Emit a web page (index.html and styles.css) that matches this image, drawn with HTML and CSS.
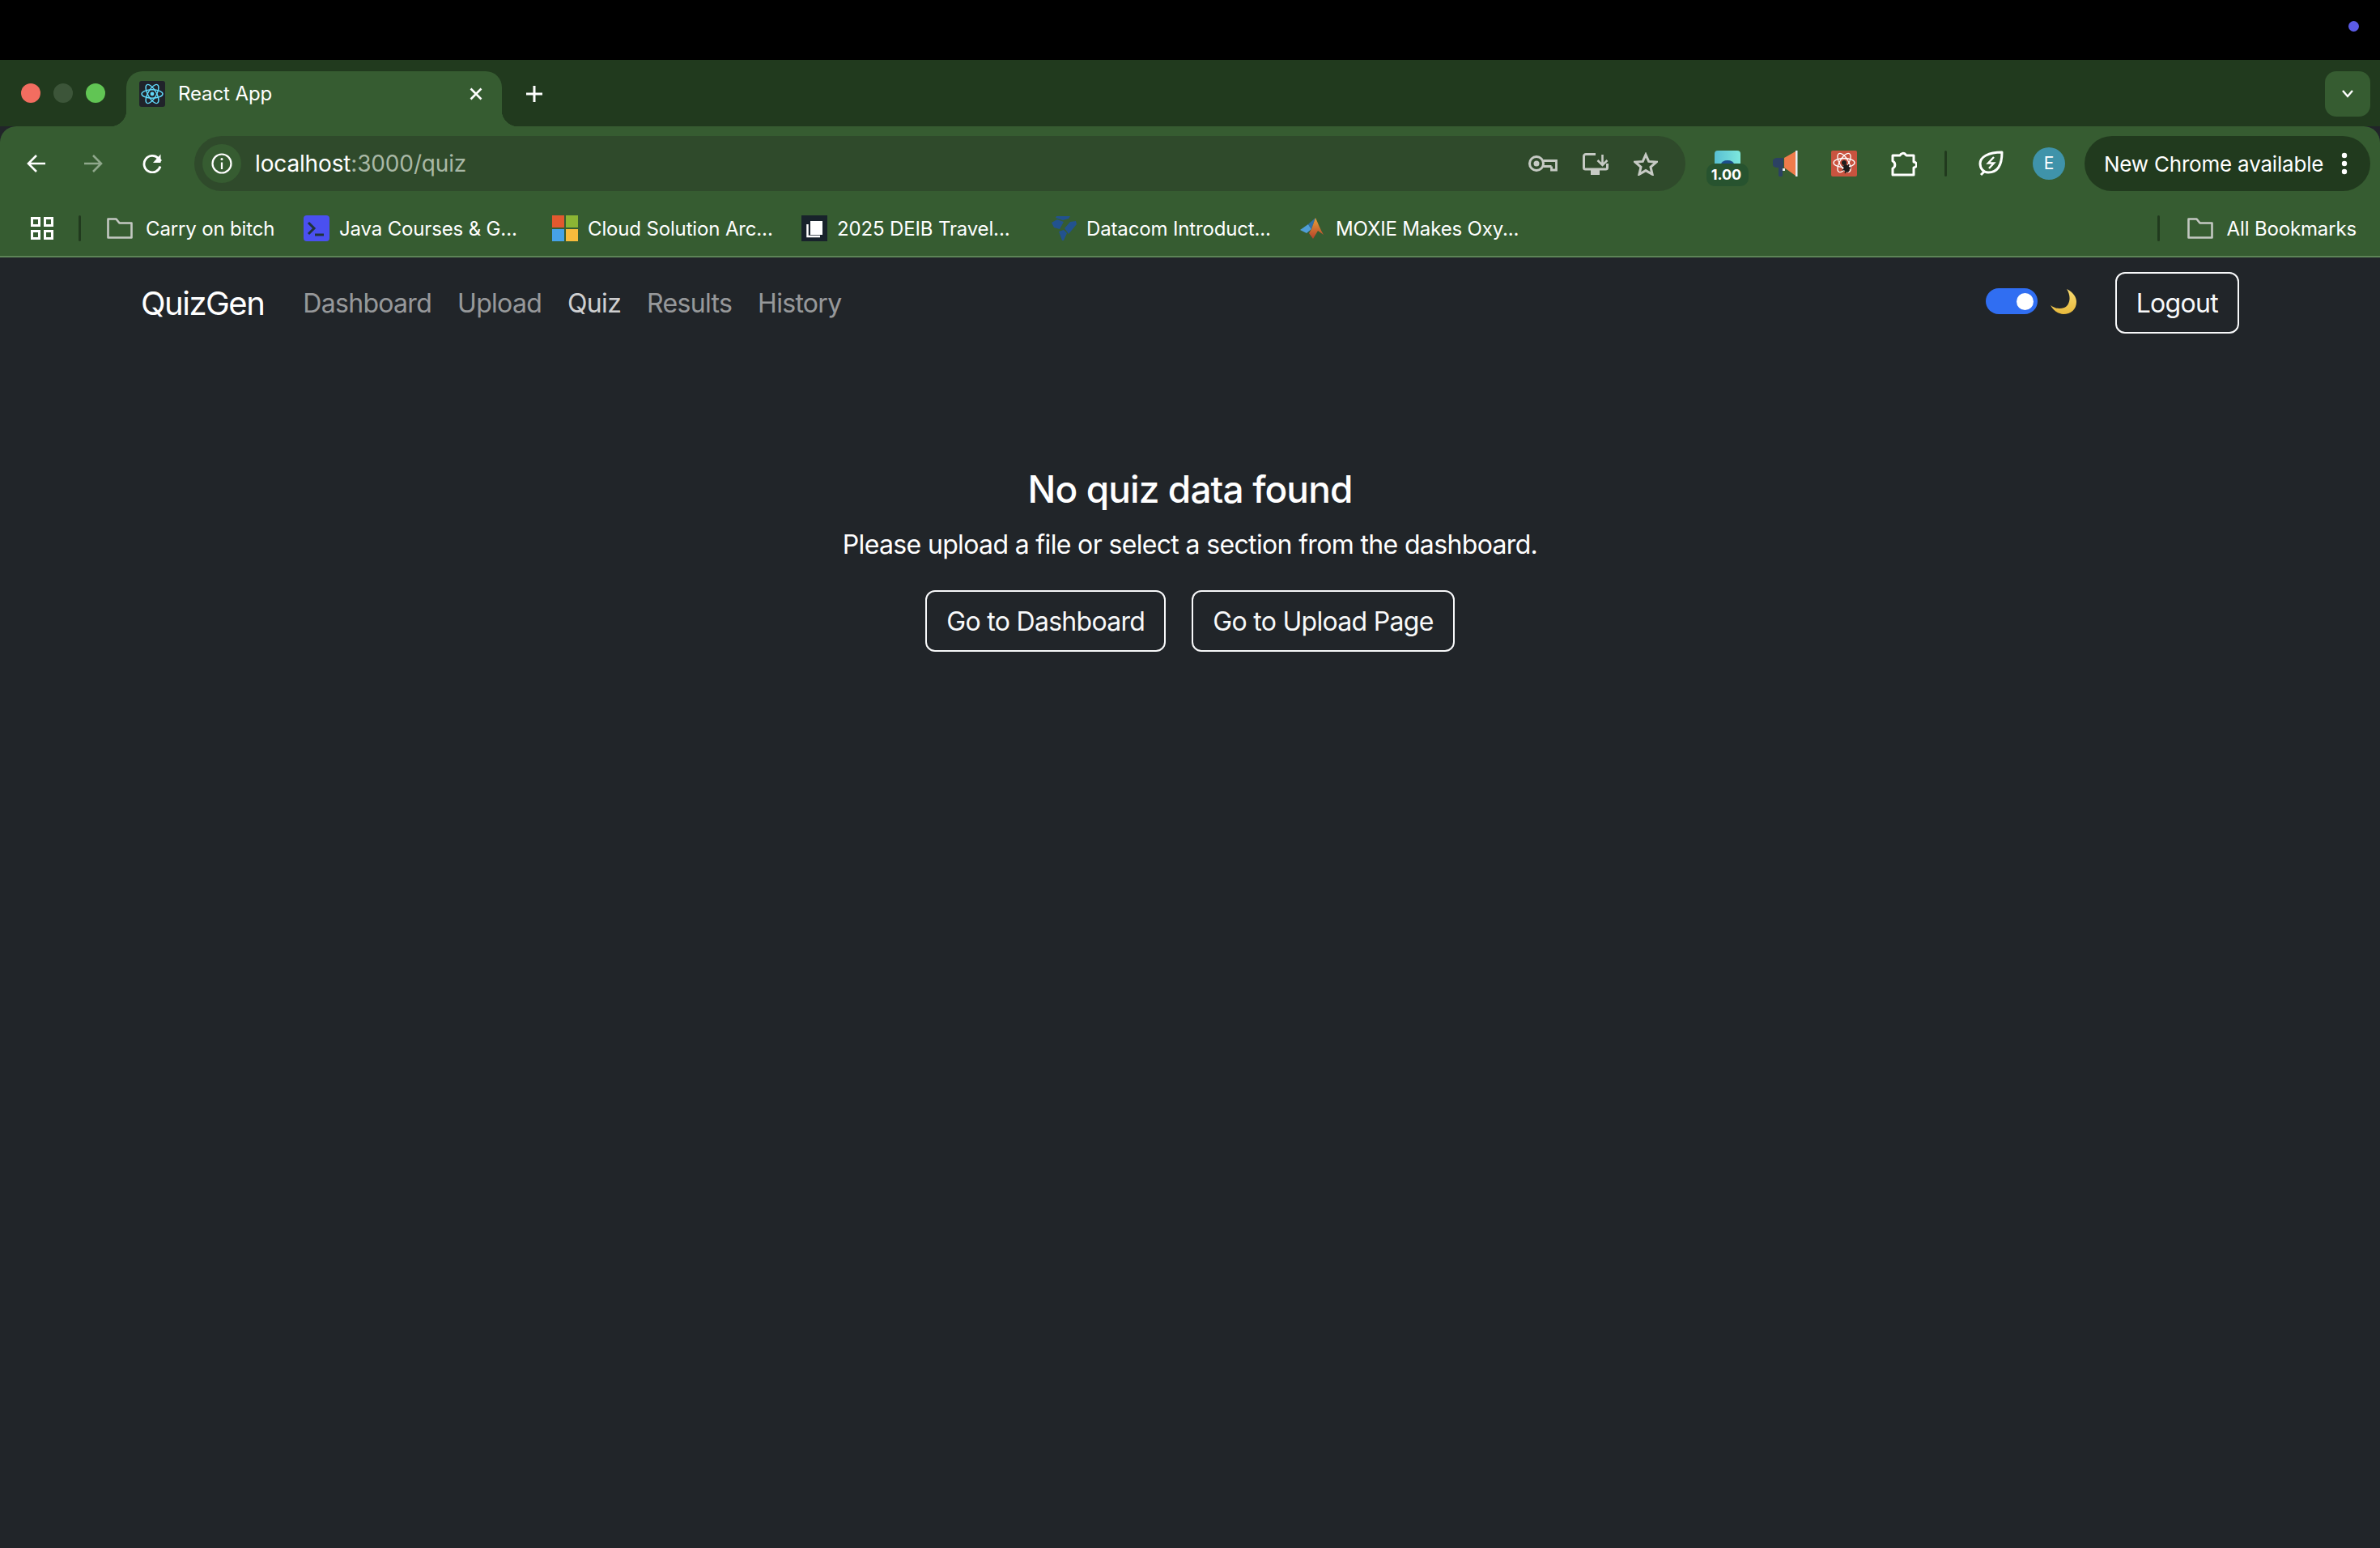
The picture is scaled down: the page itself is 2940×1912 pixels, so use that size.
FILE: index.html
```html
<!doctype html>
<html lang="en">
  <head>
    <meta charset="UTF-8" />
    <meta name="viewport" content="width=device-width, initial-scale=1.0" />
    <title>React App</title>
    <link rel="stylesheet" href="styles.css">
  </head>
  <body>
    <div class="menubar"><span class="mic-dot"></span></div>

    <div class="tabstrip">
      <div class="lights">
        <span class="light red"></span>
        <span class="light gray"></span>
        <span class="light green"></span>
      </div>
      <div class="tab">
        <svg class="favicon" viewBox="0 0 32 32">
          <rect width="32" height="32" rx="3" fill="#20232a" />
          <g fill="none" stroke="#61dafb" stroke-width="1.4">
            <ellipse cx="16" cy="16" rx="13" ry="5.2" />
            <ellipse cx="16" cy="16" rx="13" ry="5.2" transform="rotate(60 16 16)" />
            <ellipse cx="16" cy="16" rx="13" ry="5.2" transform="rotate(120 16 16)" />
          </g>
          <circle cx="16" cy="16" r="2.4" fill="#61dafb" />
        </svg>
        <span class="tab-title">React App</span>
        <svg class="tab-close" viewBox="0 0 16 16">
          <path d="M1.500 1.500l13 13M14.500 1.500l-13 13" stroke="#fff" stroke-width="2.600" fill="none" />
        </svg>
      </div>
      <svg class="new-tab" viewBox="0 0 22 22">
        <path d="M11 1v20M1 11h20" stroke="#fff" stroke-width="3" fill="none" />
      </svg>
      <div class="tab-search">
        <svg viewBox="0 0 16 12" width="16" height="12">
          <path d="M2 2l6 7 6-7" stroke="#fff" stroke-width="2.400" fill="none" />
        </svg>
      </div>
    </div>

    <div class="toolbar">
      <div class="nav-row">
        <svg class="nav-icon" viewBox="0 0 24 24">
          <path d="M24 12H3M13 2L3 12l10 10" stroke="#fff" stroke-width="2.600" fill="none" />
        </svg>
        <svg class="nav-icon" viewBox="0 0 24 24">
          <path d="M0 12h21M11 2l10 10-10 10" stroke="#8fa78b" stroke-width="2.600" fill="none" />
        </svg>
        <svg class="nav-icon" viewBox="0 0 24 24">
          <path d="M22 15.500A10.200 10.200 0 1 1 19.500 5.500L23 9" stroke="#fff" stroke-width="2.800" fill="none" />
          <path d="M22.500 .5v10.500H13z" fill="#fff" />
        </svg>

        <div class="omnibox">
          <div class="site-chip">
            <svg viewBox="0 0 26 26" width="26" height="26">
              <circle cx="13" cy="13" r="11.500" stroke="#fff" stroke-width="2.200" fill="none" />
              <path d="M13 11.500V20" stroke="#fff" stroke-width="2.200" />
              <circle cx="13" cy="7.600" r="1.500" fill="#fff" />
            </svg>
          </div>
          <div class="url">localhost<span class="url-dim">:3000/quiz</span></div>
          <div class="omni-icons">
            <svg viewBox="0 0 36 20" width="36" height="20">
              <circle cx="10" cy="10" r="8.500" stroke="#c6cac4" stroke-width="3" fill="none" />
              <circle cx="10" cy="10" r="3.500" fill="#c6cac4" />
              <path d="M18.500 6.500h16v11.500h-6v-4.500M18.500 13.500h10" stroke="#c6cac4" stroke-width="2.800" fill="none" />
            </svg>
            <svg viewBox="0 0 32 27" width="32" height="27">
              <path d="M16 1.500H4A2.500 2.500 0 0 0 1.500 4v14a2 2 0 0 0 2 2h25a2 2 0 0 0 2-2v-5" stroke="#c6cac4" stroke-width="3" fill="none" />
              <path d="M24.500 2v13M18.500 9l6 6 6-6" stroke="#c6cac4" stroke-width="2.600" fill="none" />
              <rect x="10" y="21" width="11" height="6" fill="#c6cac4" />
            </svg>
            <svg viewBox="0 0 30 29" width="30" height="29">
              <path d="M15 3l3.700 8.400 9.300 .8-7 6.100 2.100 9-8.100-4.700-8.100 4.700 2.100-9-7-6.100 9.300-.8z" stroke="#c6cac4" stroke-width="3" fill="none" />
            </svg>
          </div>
        </div>

        <div class="ext-group">
          <div class="ext ext-speed">
            <svg viewBox="0 0 32 32" width="32" height="32">
              <defs>
                <linearGradient id="speedGrad" x1="0" y1="0" x2="1" y2="0">
                  <stop offset="0" stop-color="#58bfd3" />
                  <stop offset="1" stop-color="#7ee8dc" />
                </linearGradient>
              </defs>
              <path d="M0 16V4a4 4 0 0 1 4-4h24a4 4 0 0 1 4 4v12z" fill="url(#speedGrad)" />
              <ellipse cx="16" cy="17" rx="8" ry="5" fill="#1c4f8a" />
            </svg>
            <span class="ext-badge">1.00</span>
          </div>
          <svg class="ext" viewBox="0 0 32 32">
            <path d="M14 9L28 1v30L14 21z" fill="#ef7b4b" />
            <path d="M13 9H5a5 5 0 0 0 0 12h8z" fill="#2c4163" />
            <path d="M7 21h5v9a2.500 2.500 0 0 1-5 0z" fill="#2c4163" />
            <rect x="28" y="0" width="2.500" height="32" fill="#e8edf2" />
            <rect x="12" y="22" width="3" height="3" fill="#e8edf2" />
          </svg>
          <svg class="ext" viewBox="0 0 32 32">
            <rect width="32" height="32" rx="2" fill="#c9533f" />
            <g fill="none" stroke="#fff" stroke-width="1.300">
              <ellipse cx="16" cy="15" rx="13" ry="5.500" />
              <ellipse cx="16" cy="15" rx="13" ry="5.500" transform="rotate(60 16 15)" />
              <ellipse cx="16" cy="15" rx="13" ry="5.500" transform="rotate(120 16 15)" />
            </g>
            <circle cx="16" cy="15" r="3" fill="#1d1d1d" />
            <ellipse cx="19" cy="22" rx="3.500" ry="5" fill="#1d1d1d" transform="rotate(-20 19 22)" />
            <path d="M14 19l10 3M14 24l10-3M17 28l5-11" stroke="#1d1d1d" stroke-width="1.500" />
          </svg>
          <svg class="ext ext-puzzle" viewBox="0 0 32 32">
            <path d="M2 6h9a4 4 0 0 1 7-1l1 1h9v8a3.500 3.500 0 0 1 0 7v9H2v-8a5 5 0 0 0 0-9z" stroke="#fff" stroke-width="3" fill="none" stroke-linejoin="round" />
          </svg>
          <span class="vline ext-line"></span>
          <svg class="ext ext-leaf" viewBox="0 0 32 32">
            <path d="M29 2C29 16 25 27 12 27C6 27 2 22 2 16C2 8 12 2 29 2zM8 25l-5 5" stroke="#fff" stroke-width="3" fill="none" stroke-linejoin="round" />
            <path d="M19 8l-7 7.500h7L13 22" stroke="#fff" stroke-width="2.400" fill="none" />
          </svg>
          <div class="avatar">E</div>
          <div class="update-pill">
            <span>New Chrome available</span>
            <svg viewBox="0 0 8 28" width="8" height="28">
              <circle cx="4" cy="4" r="3.200" fill="#fff" />
              <circle cx="4" cy="14" r="3.200" fill="#fff" />
              <circle cx="4" cy="24" r="3.200" fill="#fff" />
            </svg>
          </div>
        </div>
      </div>

      <div class="bookmarks-row">
        <svg class="apps" viewBox="0 0 28 28">
          <path d="M1.500 1.500h9v9h-9zM17.500 1.500h9v9h-9zM1.500 17.500h9v9h-9zM17.500 17.500h9v9h-9z" stroke="#fff" stroke-width="3" fill="none" />
        </svg>
        <span class="vline"></span>
        <div class="bookmarks">
          <div class="bookmark bookmark-folder">
            <svg class="bm-icon" viewBox="0 0 32 26" height="26">
              <path d="M1.500 24.500V1.500h10l4 5h15v18z" stroke="#c4c8c2" stroke-width="2.600" fill="none" stroke-linejoin="round" />
            </svg>
            <span>Carry on bitch</span>
          </div>
          <div class="bookmark">
            <svg class="bm-icon" viewBox="0 0 32 32">
              <rect width="32" height="32" rx="4" fill="#4a50f0" />
              <path d="M6 9l7 7-7 7" stroke="#20343a" stroke-width="3" fill="none" />
              <path d="M14 24h11" stroke="#20343a" stroke-width="3" />
            </svg>
            <span>Java Courses &amp; G...</span>
          </div>
          <div class="bookmark">
            <svg class="bm-icon" viewBox="0 0 32 32">
              <rect width="15" height="15" fill="#e2592f" />
              <rect x="17" width="15" height="15" fill="#8cb534" />
              <rect y="17" width="15" height="15" fill="#46a2e8" />
              <rect x="17" y="17" width="15" height="15" fill="#f8bb3c" />
            </svg>
            <span>Cloud Solution Arc...</span>
          </div>
          <div class="bookmark">
            <svg class="bm-icon" viewBox="0 0 32 32">
              <rect width="32" height="32" fill="#18222b" />
              <rect x="11" y="7" width="15" height="17" fill="#fff" />
              <path d="M7.500 11v15H23" stroke="#fff" stroke-width="2.500" fill="none" />
            </svg>
            <span>2025 DEIB Travel...</span>
          </div>
          <div class="bookmark">
            <svg class="bm-icon" viewBox="0 0 32 32">
              <path d="M7 1h17l-2 3-7 2-9-3zM1 9l7-4 8 3-5 9-7-2zM31 7l1 4-10 12-5-7 7-8zM10 20l6-2 4 4-4 9h-2z" fill="#22528f" />
            </svg>
            <span>Datacom Introduct...</span>
          </div>
          <div class="bookmark bookmark-last">
            <svg class="bm-icon" viewBox="0 0 29 26" height="26">
              <defs>
                <linearGradient id="matlabGrad" x1="0" y1="0" x2="0" y2="1">
                  <stop offset="0" stop-color="#e8a33a" />
                  <stop offset="1" stop-color="#b5402a" />
                </linearGradient>
              </defs>
              <path d="M0 15l10-7 4 6-6 5z" fill="#4f9ed8" />
              <path d="M10 8l9-8-5 14z" fill="#2f6fa8" />
              <path d="M14 14L19 0c3 6 6 15 10 21l-7-5-6 10-5-7z" fill="url(#matlabGrad)" />
            </svg>
            <span>MOXIE Makes Oxy...</span>
          </div>
        </div>
        <span class="vline all-line"></span>
        <div class="bookmark all-bookmarks">
          <svg class="bm-icon" viewBox="0 0 32 26" height="26">
            <path d="M1.500 24.500V1.500h10l4 5h15v18z" stroke="#c4c8c2" stroke-width="2.600" fill="none" stroke-linejoin="round" />
          </svg>
          <span>All Bookmarks</span>
        </div>
      </div>
    </div>

    <nav class="navbar">
      <div class="nav-left">
        <a class="brand">QuizGen</a>
        <ul class="nav-links">
          <li>Dashboard</li>
          <li>Upload</li>
          <li class="active">Quiz</li>
          <li>Results</li>
          <li>History</li>
        </ul>
      </div>
      <div class="nav-right">
        <span class="switch"><span class="switch-knob"></span></span>
        <svg class="moon" viewBox="0 0 32 32">
          <defs>
            <linearGradient id="moonGrad" x1="0" y1="0" x2="0" y2="1">
              <stop offset="0" stop-color="#f8dc72" />
              <stop offset="1" stop-color="#e8b93c" />
            </linearGradient>
          </defs>
          <path d="M20 1C28 5 32 11 32 17C32 26 25 32 16 32C9 32 3 27 0 21C5 25 11 26 17 24C24 21 26 10 20 1z" fill="url(#moonGrad)" />
        </svg>
        <button class="btn">Logout</button>
      </div>
    </nav>

    <main class="empty-state">
      <h4>No quiz data found</h4>
      <p>Please upload a file or select a section from the dashboard.</p>
      <div class="actions">
        <button class="btn">Go to Dashboard</button>
        <button class="btn">Go to Upload Page</button>
      </div>
    </main>
  </body>
</html>
```

FILE: styles.css
```css
* {
  box-sizing: border-box;
}

html,
body {
  margin: 0;
  height: 100%;
}

body {
  font-family: Inter, "Noto Sans", sans-serif;
  background-color: #212529;
  color: #fff;
  overflow: hidden;
}

svg {
  display: block;
  flex-shrink: 0;
}

.menubar {
  height: 74px;
  background-color: #000;
  display: flex;
  justify-content: flex-end;
  align-items: center;
  padding-right: 26px;
}

.mic-dot {
  width: 13px;
  height: 13px;
  border-radius: 50%;
  background-color: #5b5be6;
  margin-top: -10px;
}

/* tab strip */
.tabstrip {
  height: 82px;
  background-color: #213a1e;
  display: flex;
  align-items: flex-start;
  padding-top: 14px;
}

.lights {
  display: flex;
  gap: 16px;
  margin: 15px 26px 0;
}

.light {
  width: 24px;
  height: 24px;
  border-radius: 50%;
}

.red {
  background-color: #f26d60;
}

.gray {
  background-color: #3c5539;
}

.green {
  background-color: #61c554;
}

.tab {
  position: relative;
  width: 464px;
  height: 68px;
  background-color: #365c31;
  border-radius: 20px 20px 0 0;
  display: flex;
  align-items: flex-start;
  padding: 12px 24px 0 16px;
}

.tab::before,
.tab::after {
  content: "";
  position: absolute;
  bottom: 0;
  width: 20px;
  height: 20px;
}

.tab::before {
  left: -20px;
  background: radial-gradient(circle at 0 0, transparent 20px, #365c31 20.5px);
}

.tab::after {
  right: -20px;
  background: radial-gradient(circle at 100% 0, transparent 20px, #365c31 20.5px);
}

.favicon {
  width: 32px;
  height: 32px;
}

.tab-title {
  flex: 1;
  margin-left: 16px;
  font-size: 24px;
  line-height: 32px;
  letter-spacing: -0.1px;
}

.tab-close {
  width: 16px;
  height: 16px;
  margin-top: 8px;
}

.new-tab {
  width: 22px;
  height: 22px;
  margin: 17px 0 0 29px;
}

.tab-search {
  margin-left: auto;
  margin-right: 12px;
  width: 56px;
  height: 56px;
  border-radius: 14px;
  background-color: #365c31;
  display: flex;
  align-items: center;
  justify-content: center;
}

/* toolbar */
.toolbar {
  height: 162px;
  background-color: #365c31;
  border-radius: 20px 20px 0 0;
  border-bottom: 2px solid #5d8457;
}

.nav-row {
  height: 92px;
  display: flex;
  align-items: flex-start;
  padding: 12px 12px 0 32px;
}

.nav-icon {
  width: 24px;
  height: 24px;
  margin: 22px 48px 0 0;
}

.nav-icon:nth-child(3) {
  margin-right: 40px;
}

.omnibox {
  flex: 1;
  height: 68px;
  border-radius: 34px;
  background-color: #2f4a2b;
  display: flex;
  align-items: center;
  padding: 0 34px 0 10px;
}

.site-chip {
  width: 48px;
  height: 48px;
  border-radius: 50%;
  background-color: #365c31;
  display: flex;
  align-items: center;
  justify-content: center;
}

.url {
  margin-left: 17px;
  font-size: 28px;
  letter-spacing: -0.15px;
}

.url-dim {
  color: #a9b8a6;
}

.omni-icons {
  margin-left: auto;
  display: flex;
  align-items: center;
  gap: 31px;
}

.ext-group {
  width: 810px;
  margin-left: 36px;
  height: 68px;
  display: flex;
  align-items: center;
}

.ext {
  position: relative;
  width: 32px;
  height: 32px;
  margin-right: 40px;
}

.ext-puzzle {
  margin-left: 2px;
  margin-right: 34px;
}

.ext-line {
  margin-right: 39px;
}

.ext-leaf {
  margin-right: 35px;
}

.ext-badge {
  position: absolute;
  left: -10px;
  top: 16px;
  width: 52px;
  height: 28px;
  border-radius: 10px;
  background-color: #27532f;
  font-size: 18px;
  font-weight: 700;
  line-height: 28px;
  text-align: center;
  padding-right: 3px;
}

.avatar {
  width: 40px;
  height: 40px;
  border-radius: 50%;
  background-color: #3f93aa;
  font-size: 21px;
  line-height: 40px;
  text-align: center;
  margin-right: 24px;
}

.update-pill {
  width: 354px;
  height: 68px;
  border-radius: 34px;
  background-color: #213a1e;
  display: flex;
  align-items: center;
  justify-content: space-between;
  padding: 0 28px 0 24px;
  font-size: 26px;
  letter-spacing: -0.2px;
}

.vline {
  width: 3px;
  height: 32px;
  border-radius: 2px;
  background-color: #213a1e;
  flex-shrink: 0;
}

/* bookmarks bar */
.bookmarks-row {
  height: 68px;
  display: flex;
  align-items: center;
  padding-left: 38px;
}

.apps {
  width: 28px;
  height: 28px;
  margin-right: 31px;
}

.bookmarks {
  margin-left: 32px;
  display: grid;
  grid-template-columns: 243px 307px 308px 308px 308px 270px;
}

.bookmark {
  display: flex;
  align-items: center;
  gap: 12px;
  font-size: 24px;
  letter-spacing: -0.15px;
  white-space: nowrap;
}

.bm-icon {
  width: 32px;
  height: 32px;
}

.bookmark-folder {
  gap: 16px;
}

.bookmark-last {
  gap: 15px;
}

.bookmark-last .bm-icon {
  width: 29px;
  height: 26px;
}

.bookmarks > .bookmark-folder .bm-icon,
.all-bookmarks .bm-icon {
  height: 26px;
}

.all-line {
  margin-left: auto;
}

.all-bookmarks {
  margin: 0 29px 0 34px;
  gap: 17px;
}

/* page */
.navbar {
  height: 112px;
  max-width: 2640px;
  margin: 0 auto;
  padding: 0 24px;
  display: flex;
  align-items: center;
  justify-content: space-between;
}

.nav-left {
  display: flex;
  align-items: center;
}

.brand {
  font-size: 40px;
  letter-spacing: -1.5px;
  margin-right: 48px;
}

.nav-links {
  list-style: none;
  margin: 0;
  padding: 0;
  display: flex;
  gap: 32px;
  font-size: 32px;
  letter-spacing: -0.7px;
  color: rgba(255, 255, 255, 0.55);
}

.nav-links .active {
  color: rgba(255, 255, 255, 0.8);
}

.nav-right {
  display: flex;
  align-items: center;
}

.switch {
  width: 64px;
  height: 32px;
  margin-bottom: 4px;
  border-radius: 16px;
  background-color: #306ef2;
  display: flex;
  align-items: center;
  justify-content: flex-end;
  padding-right: 5px;
}

.switch-knob {
  width: 21px;
  height: 21px;
  border-radius: 50%;
  background-color: #fff;
}

.moon {
  width: 32px;
  height: 32px;
  margin: 0 48px 4px 16px;
}

.btn {
  height: 76px;
  padding: 0 24px;
  background: transparent;
  border: 2px solid #f8f9fa;
  border-radius: 12px;
  color: #f8f9fa;
  font-family: inherit;
  font-size: 32px;
  letter-spacing: -0.7px;
}

.empty-state {
  padding-top: 145px;
  text-align: center;
}

.empty-state h4 {
  margin: 0;
  font-size: 46px;
  font-weight: 450;
  letter-spacing: -0.9px;
  line-height: 58px;
}

.empty-state p {
  margin: 16px 0 0;
  font-size: 32px;
  letter-spacing: -0.65px;
  line-height: 48px;
}

.actions {
  margin-top: 32px;
  display: flex;
  justify-content: center;
  gap: 32px;
}
```
